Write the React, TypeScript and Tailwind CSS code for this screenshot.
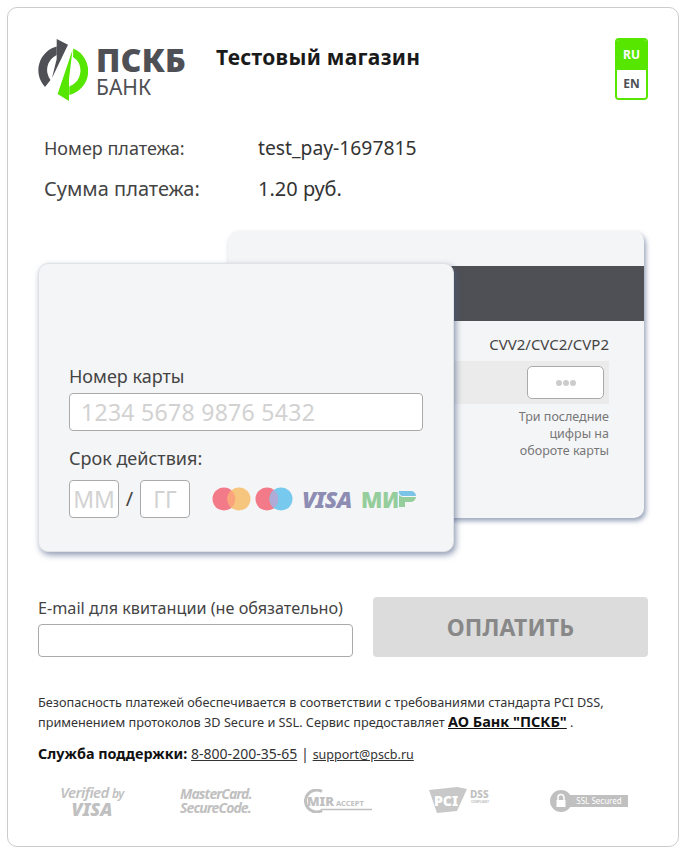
const font = "font-['Noto_Sans','Open_Sans',sans-serif]";

function Logo() {
    return (
        <div className="flex items-center gap-[8px]">
            <svg width="50" height="62" viewBox="0 0 50 62">
                <path d="M18.700 7.500 A24.500 24.500 0 0 0 7 48 L12.500 41 A16.500 16.500 0 0 1 18.700 16 Z" fill="#4f5055" />
                <path d="M18.700 0 L30 5.700 L14 39 L18.700 20 Z" fill="#4f5055" />
                <path d="M31.300 55.900 A24.500 24.500 0 0 0 35.300 9.500 L35 18 A16.500 16.500 0 0 1 31.300 47.400 Z" fill="#56e600" />
                <path d="M31 62 L19.600 55 L34.500 11 L31 40 Z" fill="#56e600" />
            </svg>
            <div className="flex flex-col leading-none mt-[3px]">
                <span className="text-[32px] font-black text-[#4f5055] leading-[30px] tracking-[0.3px]">ПСКБ</span>
                <span className="text-[21px] text-[#4f5055] leading-[24px]">БАНК</span>
            </div>
        </div>
    );
}

function CardBrands() {
    return (
        <div className="flex items-center ml-[22px]">
            <svg width="82" height="24" viewBox="0 0 82 24">
                <circle cx="12" cy="12" r="11.500" fill="#f37a88" />
                <circle cx="27" cy="12" r="11.500" fill="#f7c67e" />
                <path d="M19.500 3.500 A11.500 11.500 0 0 1 19.500 20.500 A11.500 11.500 0 0 1 19.500 3.500 Z" fill="#fba37a" />
                <circle cx="55" cy="12" r="11.500" fill="#f37a88" />
                <circle cx="69" cy="12" r="11.500" fill="#77c9ee" />
                <path d="M62 3 A11.500 11.500 0 0 1 62 21 A11.500 11.500 0 0 1 62 3 Z" fill="#b0abd6" />
            </svg>
            <span className="ml-[8px] w-[51px] text-[23px] font-black italic text-[#8d8db4] leading-none tracking-[-0.6px]">VISA</span>
            <span className="ml-[8px] flex items-center text-[22px] font-black text-[#95cd9c] leading-none tracking-[-0.5px]">
                МИ
                <svg width="17" height="16" viewBox="0 0 17 16">
                    <path d="M0 0 H12 A5 5 0 0 1 17 5 H4 A4 4 0 0 1 0 0 Z" fill="#7cc3e8" />
                    <path d="M0 4 A5 3 0 0 0 4 6 H17 A6 6 0 0 1 11 11 H6 V16 H0 Z" fill="#95cd9c" />
                </svg>
            </span>
        </div>
    );
}

function BackCard() {
    return (
        <div className="col-start-1 row-start-1 ml-[190px] mr-[4px] h-[287px] bg-[#f4f5f7] rounded-[10px] shadow-[2px_3px_5px_rgba(70,90,130,0.55)] flex flex-col">
            <div className="h-[35px]" />
            <div className="h-[55px] bg-[#4f5055]" />
            <div className="flex flex-col items-end pr-[35px]">
                <div className="mt-[13px] text-[15px] leading-[20px] text-[#444]">CVV2/CVC2/CVP2</div>
                <div className="mt-[7px] w-full h-[43px] bg-[#ebebeb] flex items-center justify-end pr-[5px]">
                    <div className="w-[77px] h-[33px] bg-white border border-[#aaa] rounded-[5px] flex items-center justify-center gap-[1px]">
                        <span className="w-[6px] h-[6px] rounded-full bg-[#ccc]" />
                        <span className="w-[6px] h-[6px] rounded-full bg-[#ccc]" />
                        <span className="w-[6px] h-[6px] rounded-full bg-[#ccc]" />
                    </div>
                </div>
                <div className="mt-[4px] text-[12.500px] leading-[17px] text-right text-[#777]">
                    Три последние<br />цифры на<br />обороте карты
                </div>
            </div>
        </div>
    );
}

function FrontCard() {
    return (
        <div className="col-start-1 row-start-1 mt-[32px] w-[416px] h-[289px] bg-[#f4f5f7] rounded-[10px] border border-[#e0e1e4] shadow-[2px_3px_6px_rgba(70,90,130,0.6)] pl-[30px] pr-[30px] z-10">
            <div className="mt-[100px] text-[18px] leading-[24px] text-[#444]">Номер карты</div>
            <div className="mt-[5px] h-[38px] w-[354px] bg-white border border-[#aaa] rounded-[4px] pl-[11px] text-[23px] leading-[37px] text-[#d2d2d2] tracking-[0.3px] whitespace-nowrap">
                1234 5678 9876 5432
            </div>
            <div className="mt-[15px] text-[18px] leading-[24px] text-[#444]">Срок действия:</div>
            <div className="mt-[10px] flex items-center">
                <div className="w-[50px] h-[38px] bg-white border border-[#aaa] rounded-[4px] text-center text-[23px] leading-[36px] text-[#d2d2d2]">ММ</div>
                <span className="w-[21px] text-center text-[20px] text-[#444]">/</span>
                <div className="w-[50px] h-[38px] bg-white border border-[#aaa] rounded-[4px] text-center text-[23px] leading-[36px] text-[#d2d2d2]">ГГ</div>
                <CardBrands />
            </div>
        </div>
    );
}

function Badges() {
    return (
        <div className="mt-[20px] ml-[19px] flex items-center text-[#c0c0c0]">
            <div className="w-[70px] flex flex-col items-center">
                <span className="text-[15px] leading-[16px] italic font-semibold tracking-[-0.6px] whitespace-nowrap">Verified <span className="text-[12px]">by</span></span>
                <span className="text-[18px] leading-[15px] italic font-black">VISA</span>
            </div>
            <div className="ml-[53px] w-[70px] flex flex-col text-[14px] italic font-bold leading-[14px] tracking-[-0.9px] whitespace-nowrap">
                <span>MasterCard.</span>
                <span>SecureCode.</span>
            </div>
            <div className="ml-[54px] w-[68px] flex items-center">
                <svg width="68" height="24" viewBox="0 0 68 24">
                    <path d="M18 2.500 A11 11 0 1 0 18 21.500" fill="none" stroke="#c0c0c0" strokeWidth="3" />
                    <path d="M17 20.500 H68" stroke="#c0c0c0" strokeWidth="1.500" />
                    <text x="3" y="16.500" fontSize="13" fontWeight="900" fill="#c0c0c0">MIR</text>
                    <text x="32" y="16.500" fontSize="7.500" fontWeight="700" fill="#c0c0c0">ACCEPT</text>
                </svg>
            </div>
            <div className="ml-[57px] w-[64px]">
                <svg width="64" height="28" viewBox="0 0 64 28">
                    <path d="M0 3 L28 0 L38 2 L28 24 L8 26 Z" fill="#c8c8c8" />
                    <text x="5" y="19" fontSize="14" fontWeight="900" fill="#fff">PCI</text>
                    <text x="41" y="11" fontSize="10" fontWeight="800" fill="#c0c0c0">DSS</text>
                    <text x="42" y="16" fontSize="3" fontWeight="700" fill="#c0c0c0">COMPLIANT</text>
                </svg>
            </div>
            <div className="ml-[57px] w-[78px] flex items-center">
                <svg width="22" height="22" viewBox="0 0 22 22" className="shrink-0">
                    <circle cx="11" cy="11" r="11" fill="#c0c0c0" />
                    <rect x="6.500" y="10" width="9" height="7" fill="#fff" />
                    <path d="M8 10 V7.500 A3 3 0 0 1 14 7.500 V10" fill="none" stroke="#fff" strokeWidth="1.500" />
                </svg>
                <span className="-ml-[2px] h-[12px] w-[58px] bg-[#c0c0c0] text-white text-[8px] leading-[12px] text-center whitespace-nowrap">SSL Secured</span>
            </div>
        </div>
    );
}

export default function App() {
    return (
        <div className={`${font} w-[689px] h-[857px] bg-white p-[7px]`}>
            <div className="w-[672px] h-[840px] border border-[#cccccc] rounded-[10px] pl-[30px] pr-[30px] pt-[30px]">

                {/* Header */}
                <div className="flex h-[64px]">
                    <Logo />
                    <h1 className="ml-[30px] mt-[5px] text-[21px] leading-[28px] font-bold text-[#1a1a1a] tracking-[0.3px]">Тестовый магазин</h1>
                    <div className="ml-auto w-[33px] h-[62px] border-2 border-[#56e600] rounded-[4px] overflow-hidden flex flex-col text-[12px] font-bold text-center">
                        <div className="h-[30px] bg-[#56e600] text-white leading-[30px]">RU</div>
                        <div className="flex-1 bg-white text-[#4f5055] leading-[28px]">EN</div>
                    </div>
                </div>

                {/* Payment info */}
                <div className="mt-[34px] pl-[6px] flex text-[18px] leading-[24px] text-[#444]">
                    <span className="w-[214px]">Номер платежа:</span>
                    <span className="text-[#333] text-[19.300px]">test_pay-1697815</span>
                </div>
                <div className="mt-[16px] pl-[6px] flex text-[20px] leading-[26px] text-[#444]">
                    <span className="w-[214px]">Сумма платежа:</span>
                    <span className="text-[#333]">1.20 руб.</span>
                </div>

                {/* Cards */}
                <div className="mt-[29px] grid grid-cols-1 h-[321px]">
                    <BackCard />
                    <FrontCard />
                </div>

                {/* Email and pay */}
                <div className="mt-[45px] flex">
                    <div className="w-[315px]">
                        <div className="text-[16.200px] leading-[22px] text-[#444] whitespace-nowrap">E-mail для квитанции (не обязательно)</div>
                        <div className="mt-[5px] h-[33px] bg-white border border-[#aaa] rounded-[4px]" />
                    </div>
                    <button className="ml-[20px] w-[275px] h-[60px] bg-[#dcdcdc] rounded-[4px] text-[23px] font-bold text-[#888] tracking-[0.2px]">ОПЛАТИТЬ</button>
                </div>

                {/* Legal */}
                <div className="mt-[36px] text-[12.700px] leading-[19px] text-[#333] whitespace-nowrap">
                    <div>Безопасность платежей обеспечивается в соответствии с требованиями стандарта PCI DSS,</div>
                    <div>применением протоколов 3D Secure и SSL. Сервис предоставляет <a className="font-bold underline text-[#111] text-[14.500px]">АО Банк "ПСКБ"</a> .</div>
                </div>
                <div className="mt-[12px] text-[14.400px] leading-[19px] text-[#333] whitespace-nowrap">
                    <span className="font-bold text-[#111]">Служба поддержки:</span> <a className="underline text-[14px]">8-800-200-35-65</a> | <a className="underline text-[12.500px]">support@pscb.ru</a>
                </div>

                <Badges />
            </div>
        </div>
    );
}
